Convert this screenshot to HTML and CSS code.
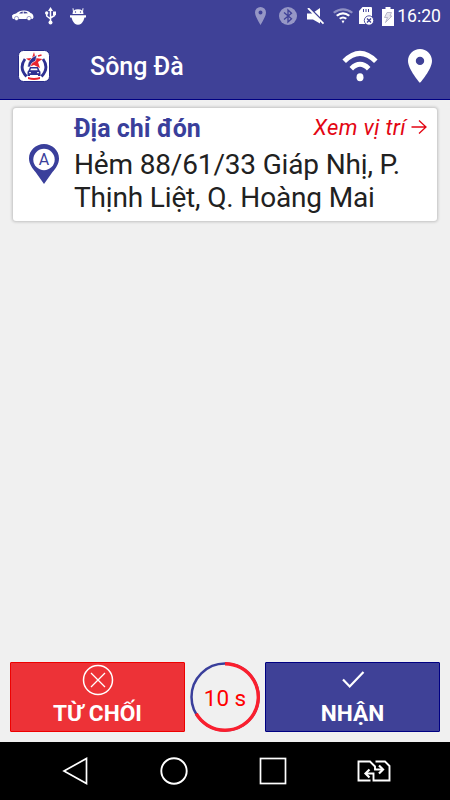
FILE: index.html
```html
<!DOCTYPE html>
<html lang="vi">
<head>
    <meta charset="UTF-8">
    <meta name="viewport" content="width=device-width, initial-scale=1.0">
    <title>Sông Đà</title>
    <link rel="stylesheet" href="styles.css">
</head>
<body>
    <div class="status-bar">
        <div class="status-left">
            <svg width="22" height="12" viewBox="0 0 22 12">
                <path d="M0 5.500 Q1 4 4 3.500 Q7 .5 12 .5 Q17 .5 18.500 3 Q21.500 3.500 21.500 7.500 L20.500 9 H1 Q0 8 0 5.500Z" fill="#fff"/>
                <path d="M7 3.500 Q9 1.600 10.700 1.600 V3.500Z M11.700 1.600 Q15 1.600 16 3.300 L11.700 3.500Z" fill="#3f4197"/>
                <circle cx="4.500" cy="8.500" r="2.100" fill="#fff" stroke="#3f4197" stroke-width=".5"/>
                <circle cx="17" cy="8.500" r="2.100" fill="#fff" stroke="#3f4197" stroke-width=".5"/>
            </svg>
            <svg width="12" height="18" viewBox="0 0 12 18">
                <path d="M5.500 3 V15 M1.700 6 V9 L5.500 12 M9.500 6 V8.500 L5.500 11" fill="none" stroke="#fff" stroke-width="1.500"/>
                <path d="M5.500 0 L8 4 H3Z M8 4.500 h3 v3.500 H8Z" fill="#fff"/>
                <circle cx="1.700" cy="6" r="1.700" fill="#fff"/>
                <circle cx="5.500" cy="15.500" r="2" fill="#fff"/>
            </svg>
            <svg width="16" height="17" viewBox="0 0 16 17">
                <path d="M3.500 4 L3 .3 M12.500 4 L13 .3" stroke="#fff" fill="none"/>
                <path d="M2.500 6 Q2.500 1.300 8 1.300 Q13.500 1.300 13.500 6Z M0 7.300 H16 V9.500 H14.500 L13.500 12.500 Q11.500 16.700 8 16.700 Q4.500 16.700 2.500 12.500 L1.500 9.500 H0Z" fill="#fff"/>
                <circle cx="5.500" cy="4" r=".7" fill="#3f4197"/>
                <circle cx="10.500" cy="4" r=".7" fill="#3f4197"/>
            </svg>
        </div>
        <div class="status-right">
            <svg class="dim" width="11" height="18" viewBox="0 0 11 18">
                <path d="M5.500 0 A5.500 5.500 0 0 0 0 5.500 Q0 9 5.500 18 Q11 9 11 5.500 A5.500 5.500 0 0 0 5.500 0Z M5.500 3.500 a2 2 0 1 1 0 4 a2 2 0 1 1 0-4Z" fill="#fff" fill-rule="evenodd"/>
            </svg>
            <svg class="dim bluetooth" width="18" height="18" viewBox="0 0 18 18">
                <circle cx="9" cy="9" r="9" fill="#fff"/>
                <path d="M5 5.500 L12.500 11.800 L9 15 V3 L12.500 6.200 L5 12.500" fill="none" stroke="#3f4197" stroke-width="1.300"/>
            </svg>
            <svg class="mute" width="18" height="17" viewBox="0 0 18 17">
                <path d="M0 5.500 H5 L13 0 V15.500 L6 11.500 H0Z" fill="#fff"/>
                <path d="M2.500 0 L17 14.500" stroke="#3f4197" stroke-width="2"/>
                <path d="M1 0 L16.500 15.700" stroke="#fff" stroke-width="1.800"/>
            </svg>
            <svg class="wifi-small" width="20" height="16" viewBox="0 0 20 16">
                <path d="M0 4 Q10 -3.500 20 4 L18.500 5.500 Q10 -.5 1.500 5.500Z" fill="#8f90c3"/>
                <path d="M3 7 Q10 1.500 17 7 L15.500 8.500 Q10 4.300 4.500 8.500Z M6 10 Q10 7 14 10 L12.500 11.500 Q10 9.700 7.500 11.500Z M8.500 12.800 Q10 12 11.500 12.800 L10 15.500Z" fill="#fff"/>
            </svg>
            <svg class="sd" width="15" height="19" viewBox="0 0 15 19">
                <path d="M3.500 0 H12 Q13 0 13 1 V17 H0 V4Z" fill="#fff"/>
                <path d="M4.500 2 V5 M7 2 V5 M9.500 2 V5" stroke="#3f4197" stroke-width="1"/>
                <circle cx="10" cy="13.500" r="4.700" fill="#fff" stroke="#3f4197" stroke-width=".9"/>
                <path d="M8 11.500 L12 15.500 M12 11.500 L8 15.500" stroke="#3f4197" stroke-width="1.300"/>
            </svg>
            <svg class="battery" width="12" height="19" viewBox="0 0 12 19">
                <path d="M3.500 0 H8.500 V2 H12 V19 H0 V2 H3.500Z" fill="#fff"/>
                <path d="M5 5.500 H9.500 L8 9 H10 L3.500 15.500 L5.500 10.500 H2.500Z" fill="#e5e5ec" stroke="#aaaabc" stroke-width=".8"/>
            </svg>
            <span class="clock">16:20</span>
        </div>
    </div>

    <header class="app-bar">
        <svg class="logo" width="32" height="32" viewBox="0 0 32 32">
            <rect x=".5" y=".5" width="31" height="31" rx="5" fill="#fff" stroke="#272b89"/>
            <path d="M7 9 Q.5 18 8.500 26.500 M25 9 Q31.500 18 23.500 26.500" fill="none" stroke="#2e3192" stroke-width="2.800"/>
            <path d="M16 2 L17.500 8 L24.500 9 L20 12 L22 18 L16 15 L11 17 L13 12 L8 8.500 L14 8Z" fill="#e8242d"/>
            <path d="M9.500 17 Q10 8.500 19 5 L17.500 11 Q13 12 12 17Z" fill="#2e3192" stroke="#fff" stroke-width=".6"/>
            <path d="M20 6 L23.500 5" stroke="#e8242d" stroke-width="1.500"/>
            <path d="M12 17 H20 L21.500 20.500 Q22.500 21 22.500 22 V26 H20 V25 H12 V26 H9.500 V22 Q9.500 21 10.500 20.500Z" fill="#2e3192"/>
            <path d="M13 18.500 H19 L19.700 20.200 H12.300Z" fill="#fff"/>
            <path d="M11 22.700 H13 M19 22.700 H21" stroke="#fff"/>
            <path d="M10 27 Q16 29 22 27 V29 Q16 31 10 29Z" fill="#e8242d"/>
        </svg>
        <h1>Sông Đà</h1>
        <svg class="wifi" width="36" height="32" viewBox="0 0 36 32">
            <path d="M2.200 11.200 Q18 -4.500 33.800 11.200" fill="none" stroke="#fff" stroke-width="5"/>
            <path d="M9.300 18.700 Q18 10 26.700 18.700" fill="none" stroke="#fff" stroke-width="5"/>
            <ellipse cx="18" cy="27.200" rx="3.500" ry="4" fill="#fff"/>
        </svg>
        <svg class="location" width="24" height="34" viewBox="0 0 24 34">
            <path d="M12 0 C5.400 0 0 5.200 0 11.800 C0 20.500 12 34 12 34 S24 20.500 24 11.800 C24 5.200 18.600 0 12 0Z M12 7.700 a4.200 4.200 0 1 1 0 8.400 a4.200 4.200 0 1 1 0-8.400Z" fill="#fff" fill-rule="evenodd"/>
        </svg>
    </header>

    <main>
        <section class="card">
            <svg class="marker" width="30" height="40" viewBox="0 0 30 40">
                <path d="M15 0 C6.700 0 0 6.500 0 14.500 C0 20 3.500 24.500 6.500 28 L15 40 L23.500 28 C26.500 24.500 30 20 30 14.500 C30 6.500 23.300 0 15 0Z" fill="#3a3f9b"/>
                <circle cx="15" cy="15.500" r="10.700" fill="#fff"/>
                <text x="15" y="21" text-anchor="middle">A</text>
            </svg>
            <div class="card-body">
                <div class="card-head">
                    <h2>Địa chỉ đón</h2>
                    <a class="view-link">Xem vị trí
                        <svg width="16" height="16" viewBox="0 0 16 16">
                            <path d="M.5 8 H15 M8 1.500 L15 8 L8 14.500" fill="none" stroke="#e30613" stroke-width="1.300"/>
                        </svg>
                    </a>
                </div>
                <p>Hẻm 88/61/33 Giáp Nhị, P. Thịnh Liệt, Q. Hoàng Mai</p>
            </div>
        </section>
    </main>

    <footer class="actions">
        <button type="button" class="btn reject">
            <svg width="32" height="32" viewBox="0 0 32 32">
                <circle cx="16" cy="16" r="14.500" fill="none" stroke="#fff" stroke-width="1.500"/>
                <path d="M9 9 L23 23 M23 9 L9 23" stroke="#fff" stroke-width="1.300"/>
            </svg>
            <span>TỪ CHỐI</span>
        </button>
        <div class="timer">
            <svg width="70" height="70" viewBox="0 0 70 70">
                <circle cx="35" cy="35" r="33.500" fill="none" stroke="#3a3f9b" stroke-width="2.500"/>
                <path d="M35 1.700 A33.300 33.300 0 1 1 6.200 51.700" fill="none" stroke="#fa1f2e" stroke-width="3.400"/>
            </svg>
            <span>10 s</span>
        </div>
        <button type="button" class="btn accept">
            <svg width="32" height="32" viewBox="0 0 32 32">
                <path d="M6 15.500 L12.700 22.500 L26.500 8" fill="none" stroke="#fff" stroke-width="2.200"/>
            </svg>
            <span>NHẬN</span>
        </button>
    </footer>

    <nav class="nav-bar">
        <svg width="28" height="28" viewBox="0 0 28 28">
            <path d="M2 14 L24.500 1.500 V26.500Z" fill="none" stroke="#fff" stroke-width="1.700"/>
        </svg>
        <svg width="28" height="28" viewBox="0 0 28 28">
            <circle cx="14" cy="14" r="12.700" fill="none" stroke="#fff" stroke-width="1.900"/>
        </svg>
        <svg width="28" height="28" viewBox="0 0 28 28">
            <rect x="1.500" y="1.500" width="25" height="25" fill="none" stroke="#fff" stroke-width="1.700"/>
        </svg>
        <svg width="34" height="22" viewBox="0 0 34 22">
            <path d="M13.500 20.500 H1.500 V1.500 H13 L18 6.500 V9.500 H25 M18.500 1.500 H28 L32.500 6 V20.500 H16.500 V13.500 H9" fill="none" stroke="#fff" stroke-width="1.900"/>
            <path d="M22 5.500 L26 9.500 L22 13.500 M12.500 9.500 L8.500 13.500 L12.500 17.500" fill="none" stroke="#fff" stroke-width="2.200"/>
        </svg>
    </nav>
</body>
</html>
```
FILE: styles.css
```css
* {
    box-sizing: border-box;
}
body {
    margin: 0;
    height: 800px;
    display: flex;
    flex-direction: column;
    font-family: Roboto, "Noto Sans", sans-serif;
    background-color: #f0f0f0;
    overflow: hidden;
}
svg {
    display: block;
    flex-shrink: 0;
}
h1, h2, p {
    margin: 0;
}
.status-bar {
    height: 32px;
    padding: 0 9px 0 12px;
    display: flex;
    justify-content: space-between;
    align-items: center;
    background-color: #3f4197;
    color: white;
}
.status-left {
    display: flex;
    align-items: center;
    gap: 11px;
}
.status-left svg:last-child {
    margin-left: 2px;
}
.status-right {
    display: flex;
    align-items: center;
}
.dim {
    opacity: 0.45;
}
.bluetooth {
    margin-left: 13px;
}
.mute {
    margin-left: 10px;
}
.wifi-small {
    margin-left: 8px;
}
.sd {
    margin-left: 6px;
}
.battery {
    margin-left: 8px;
}
.clock {
    margin-left: 3px;
    font-size: 17.6px;
    line-height: 32px;
}
.app-bar {
    height: 68px;
    padding: 0 18px;
    display: flex;
    align-items: center;
    background-color: #3f4197;
    border-bottom: 1px solid #000082;
}
.app-bar h1 {
    margin-left: 40px;
    padding-top: 2px;
    flex: 1;
    color: white;
    font-size: 25px;
    font-weight: 500;
}
.location {
    margin-left: 30px;
}
main {
    flex: 1;
    padding: 8px 13px;
}
.card {
    height: 113px;
    display: flex;
    padding: 0 10px 0 16px;
    background-color: white;
    border-radius: 3px;
    box-shadow: 0 0 3px 1px rgba(0, 0, 0, 0.2);
}
.marker {
    margin-top: 36px;
}
.marker text {
    font-size: 16px;
    fill: #3a3f9b;
}
.card-body {
    flex: 1;
    margin-left: 15px;
}
.card-head {
    height: 40px;
    display: flex;
    justify-content: space-between;
}
.card h2 {
    font-size: 25px;
    font-weight: 700;
    line-height: 42px;
    color: #3a3f9b;
}
.view-link {
    height: 38px;
    display: flex;
    align-items: center;
    gap: 5px;
    color: #e30613;
    font-size: 22px;
    font-style: italic;
    letter-spacing: 0.35px;
}
.card p {
    font-size: 28px;
    letter-spacing: -0.16px;
    line-height: 33px;
    color: #212121;
}
.actions {
    height: 80px;
    padding: 0 10px 10px;
    display: flex;
    justify-content: space-between;
}
.btn {
    width: 175px;
    height: 70px;
    padding: 1px 0 0;
    display: flex;
    flex-direction: column;
    align-items: center;
    border: 1px solid;
    border-radius: 1px;
    color: white;
    font-family: inherit;
    font-size: 22.7px;
    font-weight: 700;
    line-height: 36px;
}
.reject {
    background-color: #ed3237;
    border-color: #ee0000;
}
.accept {
    background-color: #3f4197;
    border-color: #000082;
}
.timer {
    width: 70px;
    height: 70px;
    display: grid;
    place-items: center;
    color: #ff0000;
    font-size: 22.5px;
}
.timer svg,
.timer span {
    grid-area: 1 / 1;
}
.timer span {
    padding-top: 2px;
}
.nav-bar {
    height: 58px;
    padding: 0 59px 0 62px;
    display: flex;
    align-items: center;
    justify-content: space-between;
    background-color: black;
}
```
